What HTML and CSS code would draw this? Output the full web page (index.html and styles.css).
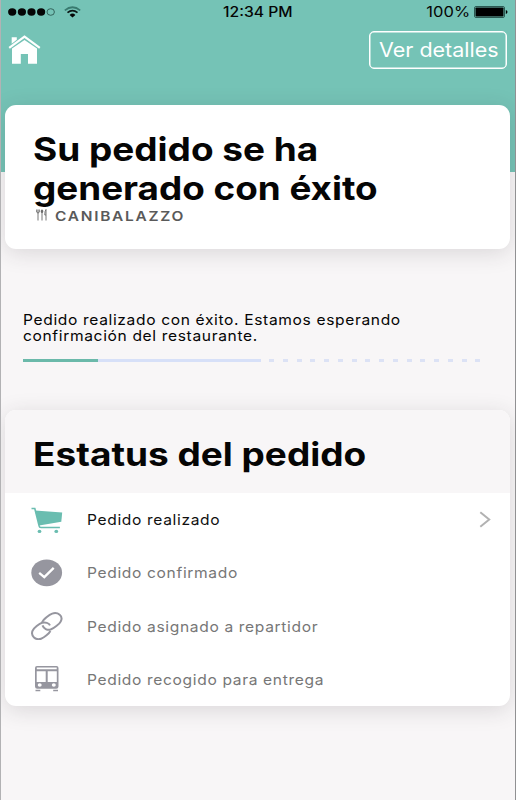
FILE: index.html
```html
<!DOCTYPE html>
<html lang="es">
<head>
<meta charset="utf-8">
<title>Estatus del pedido</title>
<link rel="stylesheet" href="styles.css">
</head>
<body>
<div class="screen">
  <div class="statusbar">
    <div class="signal">
      <svg class="dots" width="48" height="10" viewBox="0 0 48 10"><g fill="#050505"><ellipse cx="4.2" cy="5" rx="4.1" ry="3.7"/><ellipse cx="13.9" cy="5" rx="4.1" ry="3.7"/><ellipse cx="23.5" cy="5" rx="4.1" ry="3.7"/><ellipse cx="33.1" cy="5" rx="4.1" ry="3.7"/></g><ellipse cx="42.7" cy="5" rx="3.7" ry="3.3" fill="none" stroke="#244b45" stroke-width=".8"/></svg>
      <svg class="wifi" width="17" height="12" viewBox="0 0 17 12" fill="none" stroke-width="1.7"><path d="M.8 4.3Q8.5-1.8 16.2 4.3" stroke="#397a6f"/><path d="M3.5 6.6Q8.5 2.6 13.5 6.6" stroke="#0b1715"/><path d="M5.6 8.9Q8.5 6.3 11.4 8.9L8.5 11.6Z" fill="#050505"/></svg>
    </div>
    <div class="clock"><span>12:34 PM</span></div>
    <div class="power">
      <span class="percent">100%</span>
      <svg class="battery" width="34" height="12" viewBox="0 0 34 12"><rect x=".5" y=".5" width="30" height="11" rx="1.5" fill="none" stroke="#2c5a53"/><rect x="1.5" y="1.5" width="28" height="9" rx=".7"/><path d="M31.8 4Q33.5 4.5 33.5 6T31.8 8Z"/></svg>
    </div>
  </div>
  <header class="toolbar">
    <svg class="home" width="33" height="30" viewBox="0 0 33 30"><path d="M3.7 8.7V2.3H8.8V4.8Z" fill="#fff"/><path d="M1.2 12.8L16.5 1.7L31.8 12.8" fill="none" stroke="#fff" stroke-width="2.2"/><path d="M4 13.6L16.5 5L29 13.6V28.8H20V19H12.8V28.8H4Z" fill="#fff"/></svg>
    <button class="details"><span>Ver detalles</span></button>
  </header>

  <section class="card order">
    <h1 class="title"><span class="title-1">Su pedido se ha</span><span class="title-2">generado con éxito</span></h1>
    <div class="restaurant">
      <svg width="12" height="13" viewBox="0 -1 12 13" fill="none" stroke="#666" stroke-width=".9"><path d="M2 .5V11.5M.7 .5V3.2Q2 5 3.3 3.2V.5M6 3.5V11.5M10 11.5V.5Q8.7 2 8.8 6H10"/><ellipse cx="6" cy="2.3" rx=".8" ry="1.5" fill="#555"/></svg>
      <span>CANIBALAZZO</span>
    </div>
  </section>

  <section class="progress">
    <p><span class="msg-1">Pedido realizado con éxito. Estamos esperando</span><span class="msg-2">confirmación del restaurante.</span></p>
    <div class="track"><i class="done"></i><i class="next"></i><i class="later"></i></div>
  </section>

  <section class="card status">
    <h2 class="status-head"><span>Estatus del pedido</span></h2>
    <ul class="steps">
      <li class="current">
        <svg width="32" height="28" viewBox="0 -1.2 32 28"><path d="M4 3.2L31.2 5.3L30.3 14.6L8.2 18.3Z" fill="#6abdb0"/><path d="M.5 1.3H3.8L8.1 18.7Q8.3 20.3 10 20.3H28.9" fill="none" stroke="#6abdb0" stroke-width="1.6"/><ellipse cx="8.5" cy="24.2" rx="1.9" ry="1.6" fill="#6abdb0"/><ellipse cx="25.3" cy="24.2" rx="1.9" ry="1.6" fill="#6abdb0"/></svg>
        <span>Pedido realizado</span>
        <svg class="chevron" width="12" height="17" viewBox="0 0 12 17" fill="none" stroke="#b2b2b2" stroke-width="2"><path d="M1.3 1.3L10.2 8.5L1.3 15.7"/></svg>
      </li>
      <li>
        <svg width="32" height="28" viewBox="0 0 32 28"><ellipse cx="15.7" cy="13.8" rx="15.4" ry="13.4" fill="#96969f"/><path d="M8.2 13.8L13.3 18.1L22.7 8.9" fill="none" stroke="#fff" stroke-width="2.3"/></svg>
        <span>Pedido confirmado</span>
      </li>
      <li>
        <svg width="32" height="28" viewBox="0 0 32 28" fill="none" stroke="#96969f" stroke-width="2"><path d="M11.2 10.4C12 7.7 18.5 2.5 21.2 1.6C27-.2 32.5 4 29.8 9.3C28.7 11.8 22.4 16.7 19.7 17.5C16.3 18.5 12.6 16.6 11.5 13.4"/><path d="M19 13.4C18 10.9 14.2 10 11.1 10.8C8.5 11.5 2.5 16.2 1.5 18.9C-.5 24.2 4.7 28.5 10.1 26.7C12.7 25.8 18 21.8 19.4 19"/></svg>
        <span>Pedido asignado a repartidor</span>
      </li>
      <li>
        <svg width="32" height="28" viewBox="0 1 32 28"><path fill="#96969f" fill-rule="evenodd" d="M6 1H25.5Q27.500 1 27.500 3V21.500Q27.500 23.800 25.300 23.800H6.200Q4 23.800 4 21.500V3Q4 1 6 1ZM5.800 2.500V4.300H25.700V2.500ZM5.700 6.200V17H14.700V6.200ZM16.700 6.200V17H25.800V6.200ZM8.700 18.200A2 1.800 0 1 0 8.700 21.800A2 1.800 0 1 0 8.700 18.200ZM22.800 18.200A2 1.800 0 1 0 22.800 21.800A2 1.800 0 1 0 22.800 18.200Z"/><path d="M4.500 25.500H9.300M22.200 25.500H27" stroke="#96969f" stroke-width="1.500"/></svg>
        <span>Pedido recogido para entrega</span>
      </li>
    </ul>
  </section>
</div>
</body>
</html>
```
FILE: styles.css
```css
* { box-sizing: border-box; }
body { margin: 0; font-family: Inter, "Liberation Sans", sans-serif; color: #050505; }
span { display: inline-block; white-space: nowrap; transform-origin: left center; }

.screen {
  height: 800px;
  padding: 0 5px 0 4px;
  overflow: hidden;
  border-left: 1px solid #b2b2b4;
  border-right: 1px solid #919193;
  background: linear-gradient(#75c3b6 0 172px, #f8f6f7 172px);
}

.statusbar { display: grid; grid-template-columns: 1fr auto 1fr; align-items: center; height: 23px; font-size: 14px; }
.signal { display: flex; align-items: center; gap: 8px; padding-left: 3px; }
.clock { width: 70px; padding-bottom: 1px; font-weight: 500; }
.clock span { transform: scaleX(1.12); }
.power { display: flex; align-items: center; justify-content: flex-end; gap: 4px; padding-right: 2px; }
.percent { transform: scaleX(1.18); transform-origin: right center; }

.toolbar { display: flex; justify-content: space-between; align-items: flex-start; height: 82px; padding: 8px 3px 0; }
.home { margin-top: 4px; }
.details {
  width: 138px; height: 38px; padding: 0 0 0 9px;
  text-align: left;
  border: 1.5px solid #fff; border-radius: 5px;
  box-shadow: inset 0 0 0 .5px #fff;
  background: none; color: #fff;
  font: 20px/34px Inter, sans-serif;
}
.details span { transform: scaleX(1.075); }

.card { border-radius: 11px; background: #fff; box-shadow: 0 4px 22px rgba(50, 40, 45, .15); }
.order { height: 144px; padding: 25px 28px 0; }
.title { margin: 0; font-size: 33px; line-height: 39px; font-weight: 700; }
.title span { display: block; width: max-content; }
.title-1 { transform: scaleX(1.12); }
.title-2 { transform: scaleX(1.116); }
.restaurant { display: flex; gap: 7px; align-items: flex-start; height: 17px; padding-left: 3px; font-size: 13.5px; line-height: 16px; font-weight: 600; color: #5a5a5a; letter-spacing: 1.5px; }
.restaurant span { transform: scaleX(1.145); }

.progress { height: 161px; padding: 62px 18px 0; }
.progress p { margin: 0; font-size: 14.5px; line-height: 16.5px; letter-spacing: .6px; }
.progress p span { display: block; width: max-content; }
.msg-1, .msg-2 { transform: scaleX(1.074); }
.msg-1 { position: relative; top: 1px; }
.track { display: flex; width: 458px; height: 3px; margin-top: 15px; }
.done { width: 75px; background: #6bb9aa; }
.next { width: 163px; background: #d7e0f8; }
.later { flex: 1; margin-left: 8px; background: repeating-linear-gradient(90deg, #dce2f5 0 5px, transparent 5px 13.75px); }

.status { height: 295.5px; overflow: hidden; }
.status-head { margin: 0; height: 83px; padding: 24px 28px 0; font-size: 32.5px; line-height: 42px; background: #f8f6f7; }
.status-head span { transform: scaleX(1.138); }
.steps { margin: 0; padding: 0 19px 0 26px; list-style: none; font-size: 14.5px; letter-spacing: .6px; color: #777; }
.steps li { display: flex; align-items: center; height: 53.3px; }
.steps span { margin-left: 24px; transform: scaleX(1.075); }
.steps .current { color: #111; }
.chevron { margin-left: auto; }
```
